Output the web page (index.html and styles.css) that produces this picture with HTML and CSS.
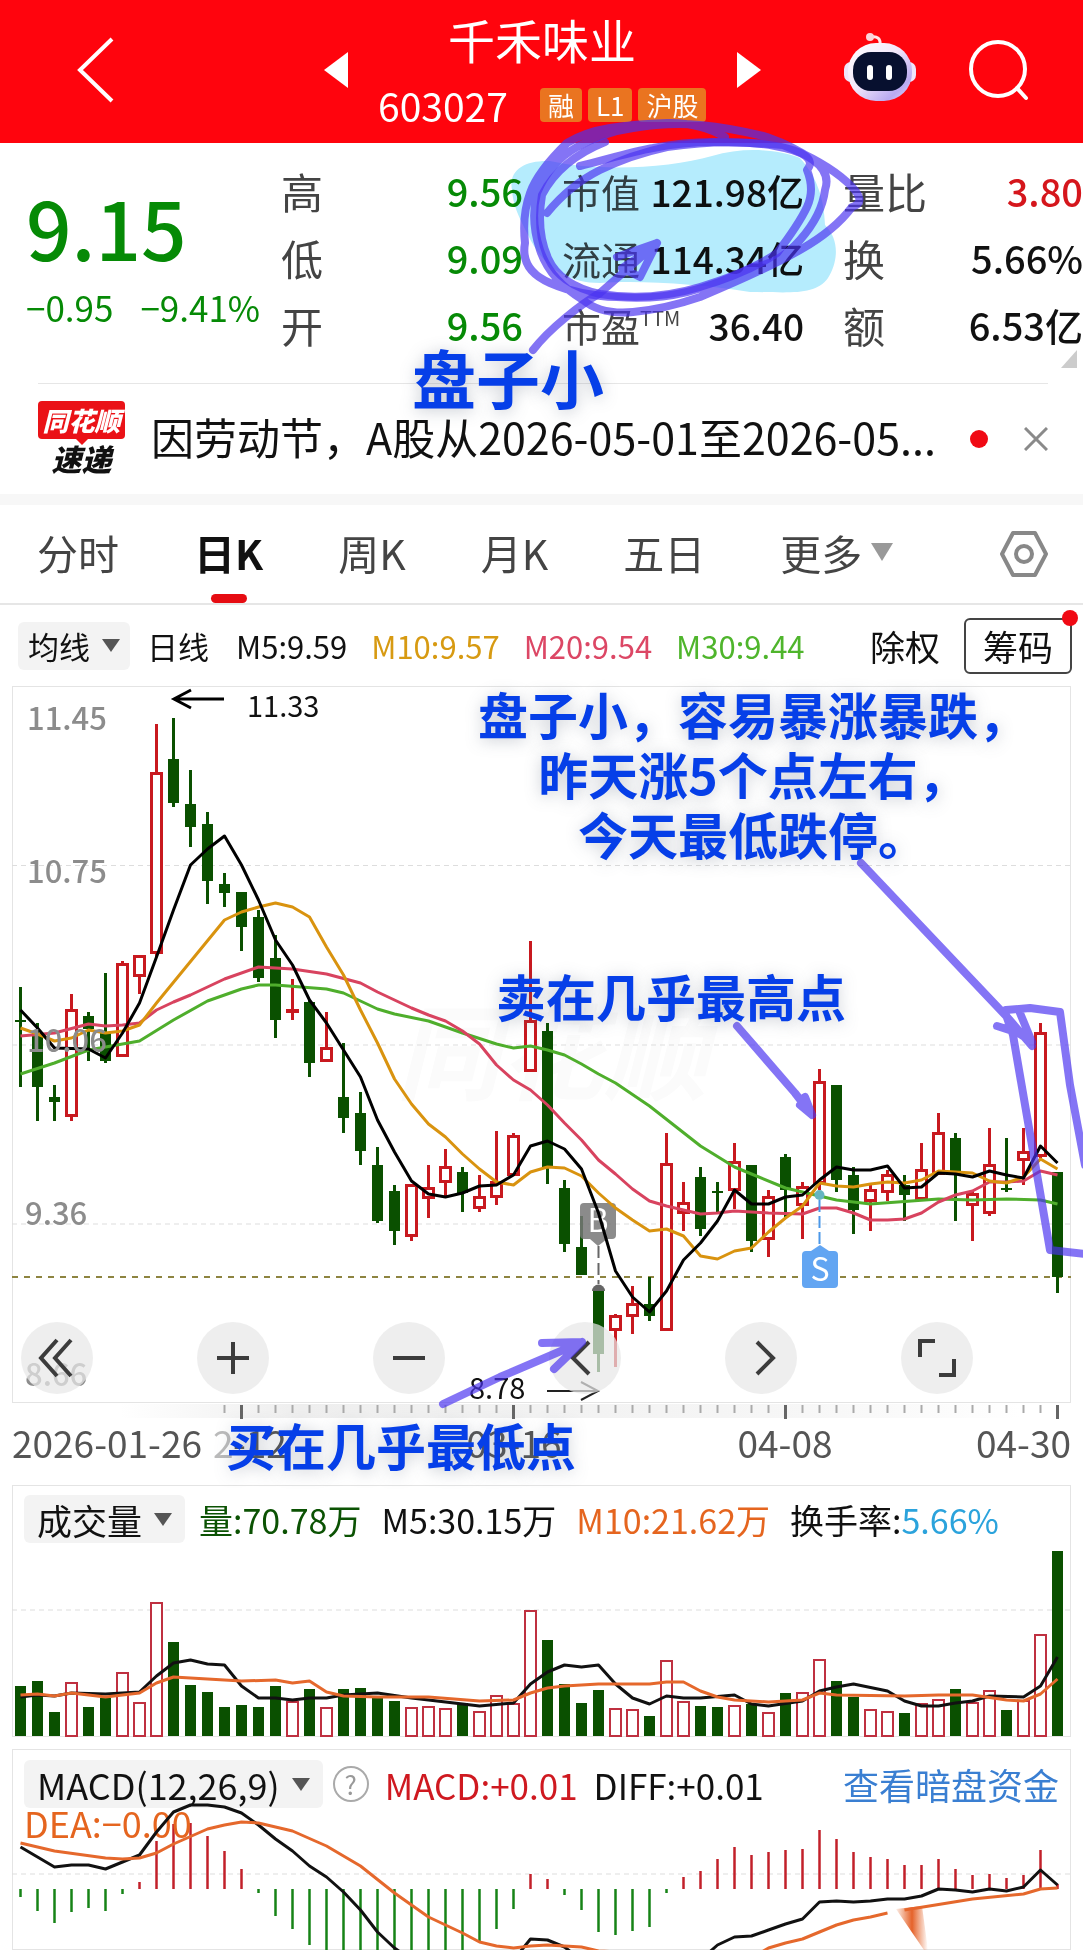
FILE: index.html
```html
<!DOCTYPE html>
<html lang="zh-CN">
<head>
<meta charset="utf-8">
<meta name="viewport" content="width=device-width, initial-scale=1">
<title>千禾味业 603027</title>
<link rel="stylesheet" href="styles.css">
</head>
<body>
<main class="page">
  <header class="topbar">
    <button class="icon-btn back" aria-label="返回"><svg width="40" height="68" viewBox="0 0 40 68"><path d="M36 3 4 34 36 65" fill="none" stroke="#fff" stroke-width="4"/></svg></button>
    <button class="icon-btn" aria-label="上一只"><svg width="24" height="36" viewBox="0 0 24 36"><path d="M24 0V36L0 18Z" fill="#fff"/></svg></button>
    <div class="stock">
      <h1>千禾味业</h1>
      <div class="code-row"><span class="code">603027</span><span class="badge">融</span><span class="badge">L1</span><span class="badge">沪股</span></div>
    </div>
    <button class="icon-btn" aria-label="下一只"><svg width="24" height="36" viewBox="0 0 24 36"><path d="M0 0V36L24 18Z" fill="#fff"/></svg></button>
    <button class="icon-btn robot" aria-label="智能助手">
      <svg width="72" height="70" viewBox="0 0 72 70">
        <defs><linearGradient id="shell" x1="0" y1="0" x2="1" y2="1"><stop offset="0" stop-color="#fff"/><stop offset=".45" stop-color="#f3e8fb"/><stop offset=".8" stop-color="#b9aaf0"/><stop offset="1" stop-color="#e6dcfa"/></linearGradient></defs>
        <path d="M36 14C37 6 33 4 27 5" fill="none" stroke="#ffe6ea" stroke-width="3"/><circle cx="26" cy="5" r="4" fill="#fbd5da"/>
        <rect x="0" y="30" width="14" height="20" rx="7" fill="#efe6fb"/><rect x="58" y="30" width="14" height="20" rx="7" fill="#efe6fb"/>
        <rect x="4" y="11" width="64" height="58" rx="28" fill="url(#shell)"/>
        <rect x="9" y="20" width="54" height="39" rx="18" fill="#07102f"/>
        <rect x="23" y="33" width="6" height="15" rx="3" fill="#fff"/><rect x="42" y="33" width="6" height="15" rx="3" fill="#fff"/>
      </svg>
    </button>
    <button class="icon-btn" aria-label="搜索"><svg width="60" height="62" viewBox="0 0 60 62"><circle cx="29" cy="30" r="27" fill="none" stroke="#fff" stroke-width="4"/><path d="M48 49 57 59" stroke="#fff" stroke-width="4" stroke-linecap="round"/></svg></button>
  </header>

  <section class="quote">
    <div class="price">
      <strong>9.15</strong>
      <div class="change"><span>−0.95</span><span>−9.41%</span></div>
    </div>
    <dl class="stats high"><dt>高</dt><dd>9.56</dd><dt>低</dt><dd>9.09</dd><dt>开</dt><dd>9.56</dd></dl>
    <dl class="stats cap"><dt>市值</dt><dd>121.98亿</dd><dt>流通</dt><dd>114.34亿</dd><dt>市盈<sup>TTM</sup></dt><dd>36.40</dd></dl>
    <dl class="stats ratio"><dt>量比</dt><dd class="up">3.80</dd><dt>换</dt><dd>5.66%</dd><dt>额</dt><dd>6.53亿</dd></dl>
    <svg class="corner" width="16" height="18" viewBox="0 0 16 18"><path d="M16 0V18H0Z" fill="#ccc"/></svg>
  </section>

  <section class="news">
    <div class="news-logo"><span class="logo-top">同花顺</span><span class="logo-bottom">速递</span></div>
    <a class="news-text" href="#">因劳动节，A股从2026-05-01至2026-05...</a>
    <span class="dot"></span>
    <button class="icon-btn" aria-label="关闭"><svg width="24" height="24" viewBox="0 0 24 24"><path d="M1 1 23 23M23 1 1 23" stroke="#8a8a8a" stroke-width="3"/></svg></button>
  </section>

  <nav class="tabs">
    <button>分时</button><button class="active">日K</button><button>周K</button><button>月K</button><button>五日</button>
    <button class="more">更多<svg width="22" height="18" viewBox="0 0 22 18"><path d="M0 0H22L11 18Z" fill="#999"/></svg></button>
    <button class="settings" aria-label="设置"><svg width="48" height="48" viewBox="0 0 48 48"><path d="M13 3H35L46 24 35 45H13L2 24Z" fill="none" stroke="#888" stroke-width="4" stroke-linejoin="round"/><circle cx="24" cy="24" r="8" fill="none" stroke="#888" stroke-width="4"/></svg></button>
  </nav>

  <div class="ma-row">
    <button class="picker">均线<svg width="18" height="13" viewBox="0 0 18 13"><path d="M0 0H18L9 13Z" fill="#555"/></svg></button>
    <span class="period">日线</span>
    <span>M5:9.59</span><span class="m10">M10:9.57</span><span class="m20">M20:9.54</span><span class="m30">M30:9.44</span>
    <button class="adjust">除权</button>
    <button class="chips">筹码</button>
  </div>

  <section class="panel k-panel">
    <svg id="kline" class="plot" viewBox="12 686 1059 717"></svg>
    <div class="tools">
      <button aria-label="更早"><svg width="40" height="40" viewBox="0 0 40 40"><path d="M20 2 4 20 20 38M34 2 18 20 34 38"/></svg></button>
      <button aria-label="放大"><svg width="40" height="40" viewBox="0 0 40 40"><path d="M4 20H36M20 4V36"/></svg></button>
      <button aria-label="缩小"><svg width="40" height="40" viewBox="0 0 40 40"><path d="M4 20H36"/></svg></button>
      <button aria-label="左移"><svg width="40" height="40" viewBox="0 0 40 40"><path d="M24 4 8 20 24 36"/></svg></button>
      <button aria-label="右移"><svg width="40" height="40" viewBox="0 0 40 40"><path d="M16 4 32 20 16 36"/></svg></button>
      <button aria-label="全屏"><svg width="40" height="40" viewBox="0 0 40 40"><path d="M3 19V3H18M37 21V37H22"/></svg></button>
    </div>
  </section>
  <svg id="axis" class="plot axis" viewBox="0 1403 1083 82"></svg>

  <section class="panel">
    <div class="indicators">
      <button class="picker">成交量<svg width="18" height="13" viewBox="0 0 18 13"><path d="M0 0H18L9 13Z" fill="#555"/></svg></button>
      <span class="vol">量:70.78万</span><span>M5:30.15万</span><span class="orange">M10:21.62万</span><span>换手率:<span class="cyan">5.66%</span></span>
    </div>
    <svg id="volume" class="plot" viewBox="12 1550 1059 187"></svg>
  </section>

  <section class="panel macd">
    <div class="indicators">
      <button class="picker">MACD(12,26,9)<svg width="18" height="13" viewBox="0 0 18 13"><path d="M0 0H18L9 13Z" fill="#555"/></svg></button>
      <button class="help" aria-label="说明">?</button>
      <span class="red">MACD:+0.01</span><span>DIFF:+0.01</span>
      <a href="#">查看暗盘资金</a>
    </div>
    <svg id="macd" class="plot" viewBox="12 1809 1059 141"></svg>
  </section>

  <svg class="marker highlighter" viewBox="0 0 1083 1950">
    <path d="M512 190C508 170 525 160 550 161C600 172 670 168 712 156C745 146 780 150 800 158C815 175 824 195 825 225C840 240 838 262 828 278C815 296 790 292 750 292C700 284 640 280 600 283C560 283 540 260 528 235C518 215 513 205 512 190Z"/>
  </svg>
  <svg class="marker pen" viewBox="0 0 1083 1950">
    <path d="M580 166C605 160 630 152 653 148Q683 142 713 142T783 145Q825 162 847 182T852 207Q835 230 800 250T700 297Q665 309 633 312T583 300Q550 280 540 250T537 193Q550 162 577 147T633 128Q668 122 700 125T767 137Q795 147 813 160T825 190Q822 215 800 240T753 267Q720 284 687 292T617 297Q580 296 550 283T525 243Q522 215 530 193T567 143Q585 132 610 128T667 123 725 137"/>
    <path d="M547 213Q570 185 600 170T667 147Q730 138 775 146T807 170Q815 190 807 207T777 253Q750 272 700 287T600 294Q560 285 548 258T542 195Q560 160 605 142"/>
    <path d="M533 350C550 328 580 305 600 293L657 243M617 257 657 243 640 277 622 268 650 250"/>
    <path d="M861 863 1008 1018 1032 1046M997 1026 1022 1034M1020 1013 1032 1042 1008 1026 1030 1040M1006 1010 1030 1008 1060 1012 1070 1085 1085 1165M1005 1012 1013 1035 1050 1250 1085 1254"/>
    <path d="M737 1026 795 1093 812 1115M805 1097 812 1115 800 1105"/>
    <path d="M443 1404 500 1377 582 1342M542 1343 582 1342 554 1369"/>
  </svg>
  <p class="note note-cap">盘子小</p>
  <p class="note note-today">盘子小，容易暴涨暴跌，<br>昨天涨5个点左右，<br>今天最低跌停。</p>
  <p class="note note-sell">卖在几乎最高点</p>
  <p class="note note-buy">买在几乎最低点</p>
</main>
<script src="charts.js"></script>
</body>
</html>
```
FILE: styles.css
```css
* { box-sizing: border-box; }
body {
  margin: 0;
  background: #fff;
  color: #111;
  font-family: "Noto Sans CJK SC", "Noto Sans", sans-serif;
}
button { border: 0; padding: 0; background: none; color: inherit; font: inherit; }
a { color: inherit; text-decoration: none; }
svg { display: block; }
h1, p, dl, dd { margin: 0; }
.page { position: relative; overflow: hidden; }

.topbar {
  display: flex;
  align-items: center;
  height: 143px;
  padding: 0 54px 4px 76px;
  background: #ff040d;
  color: #fff;
}
.back { margin-right: auto; }
.stock { width: 389px; padding: 4px 0 0 30px; }
.stock h1 { text-align: center; padding-right: 31px; font-size: 47px; font-weight: 400; line-height: 66px; }
.code-row { display: flex; align-items: center; gap: 6px; height: 66px; }
.code { margin-right: 26px; font-size: 39px; }
.badge { padding: 0 8px; border-radius: 4px; background: #ea7420; font-size: 26px; line-height: 34px; }
.robot { margin: 0 53px 6px 83px; }

.quote {
  position: relative;
  display: grid;
  grid-template-columns: 255px 281px 281px 240px;
  justify-content: end;
  height: 240px;
  margin: 0 0 0 26px;
}
.price { padding-top: 32px; color: #068a06; }
.price strong { display: block; font-size: 80px; font-weight: 500; line-height: 102px; }
.change { display: flex; gap: 27px; padding-top: 4px; font-size: 35px; line-height: 52px; white-space: nowrap; }
.stats {
  display: grid;
  grid-template-columns: auto auto;
  grid-auto-rows: 67px;
  justify-content: space-between;
  align-content: start;
  align-items: center;
  padding: 14px 39px 0 0;
  font-size: 38px;
  line-height: 60px;
}
.stats dt { color: #444; font-size: 42px; white-space: nowrap; }
.stats dd { font-weight: 500; text-align: right; white-space: nowrap; }
.stats .up { color: #d5161c; }
.stats sup { font-size: 20px; line-height: 1px; vertical-align: 16px; }
.high dd { color: #068a06; }
.cap { font-size: 37px; }
.cap dt { width: 80px; font-size: 39px; }
.ratio { padding-right: 0; }
.corner { position: absolute; right: 6px; bottom: 15px; }

.news {
  display: flex;
  align-items: center;
  height: 111px;
  margin: 0 35px 0 38px;
  border-top: 1px solid #e6e6e6;
}
.news-logo { width: 87px; font-weight: 900; font-style: italic; text-align: center; }
.logo-top { position: relative; display: block; border-radius: 4px; background: #ea1217; color: #fff; font-size: 26px; line-height: 38px; }
.logo-top::after { content: ""; position: absolute; top: 100%; left: 50%; margin-left: -6px; border: 6px solid transparent; border-top-color: #ea1217; border-bottom: 0; }
.logo-bottom { display: block; font-size: 30px; line-height: 38px; }
.news-text { margin-left: 26px; padding-bottom: 6px; font-size: 43px; line-height: 64px; white-space: nowrap; }
.dot { width: 18px; height: 18px; margin: 0 36px 0 auto; border-radius: 50%; background: #f00a14; }

.tabs {
  display: flex;
  align-items: center;
  gap: 75px;
  height: 111px;
  padding: 0 35px 0 37px;
  border-top: 11px solid #f7f7f7;
  border-bottom: 2px solid #e6e6e6;
  color: #444;
  font-size: 41px;
  line-height: 94px;
}
.tabs button { padding-bottom: 4px; }
.tabs .active { position: relative; color: #111; font-weight: 700; }
.active::after { content: ""; position: absolute; bottom: 0; left: 50%; width: 36px; height: 9px; margin-left: -18px; border-radius: 5px; background: #e60c12; }
.more { display: flex; align-items: center; gap: 9px; }
.tabs .settings { margin-left: auto; padding: 0; }

.ma-row {
  display: flex;
  align-items: center;
  gap: 24px;
  height: 81px;
  padding: 0 11px 0 18px;
  font-size: 31px;
  white-space: nowrap;
}
.picker { display: flex; align-items: center; gap: 12px; height: 48px; padding: 0 13px; border-radius: 6px; background: #f3f3f3; }
.ma-row .picker { padding: 0 10px; }
.period { margin: 0 3px 0 -7px; }
.m10 { color: #d79a12; }
.m20 { color: #dc4765; }
.m30 { color: #4fb52c; }
.adjust { margin-left: auto; font-size: 35px; }
.chips { position: relative; width: 108px; height: 56px; border: 2px solid #444; border-radius: 6px; font-size: 35px; line-height: 50px; }
.chips::after { content: ""; position: absolute; top: -10px; right: -8px; width: 16px; height: 16px; border-radius: 50%; background: #f00a14; }

.panel { position: relative; margin: 0 12px 12px; box-shadow: inset 0 0 0 1px #e4e4e4; }
.k-panel { margin-bottom: 0; }
.macd { margin-bottom: 0; }
.plot { width: 100%; height: auto; overflow: visible; }
.tools { position: absolute; left: 9px; bottom: 9px; display: flex; gap: 104px; }
.tools button { display: grid; place-items: center; width: 72px; height: 72px; border-radius: 50%; background: rgba(232, 232, 232, .72); }
.tools path { fill: none; stroke: #3c3c3c; stroke-width: 4; }

.indicators {
  display: flex;
  align-items: center;
  gap: 20px;
  height: 68px;
  margin-bottom: -3px;
  padding: 0 12px;
  font-size: 34px;
  white-space: nowrap;
}
.indicators .picker { margin-right: -6px; font-size: 35px; }
.indicators a { margin-left: auto; color: #3a7fd2; font-size: 36px; }
.macd .indicators { height: 60px; margin: 0; padding-top: 10px; gap: 16px; font-size: 35px; }
.macd .picker { font-size: 36px; }
.help { width: 36px; height: 36px; border: 2px solid #aaa; border-radius: 50%; color: #999; font-size: 26px; line-height: 30px; }
.vol { color: #0b5203; }
.orange { color: #e5651f; }
.cyan { color: #2ba3dc; }
.red { color: #cf1920; }

.marker { position: absolute; top: 0; left: 0; width: 100%; height: auto; pointer-events: none; }
.highlighter { mix-blend-mode: multiply; fill: #b5ecfd; }
.pen path { fill: none; stroke: #4a32f0; stroke-opacity: .68; stroke-width: 8; stroke-linecap: round; stroke-linejoin: round; }
.note { position: absolute; color: #063fe8; font-size: 50px; font-weight: 700; line-height: 60px; text-align: center; white-space: nowrap; text-shadow: 0 2px 16px rgba(90, 100, 120, .35); }
.note-cap { top: 340px; left: 412px; font-size: 64px; line-height: 72px; }
.note-today { top: 683px; left: 478px; }
.note-sell { top: 965px; left: 496px; }
.note-buy { top: 1414px; left: 226px; }

.grid { stroke: #ddd; stroke-width: 1; stroke-dasharray: 5 4; }
.last { stroke: #8d8440; stroke-width: 2; stroke-dasharray: 6 6; }
.line { fill: none; stroke-width: 3; stroke-linejoin: round; }
.scale { fill: #8c8c8c; font-size: 31px; font-weight: 500; }
.extreme { fill: #111; font-size: 29px; }
.date { fill: #555; font-size: 37px; }
.faded { fill: #bbb; }
.watermark { fill: #fbfbfb; font-size: 104px; font-weight: 700; font-style: italic; }
.flag { fill: #fff; font-size: 32px; text-anchor: middle; }
.middle { text-anchor: middle; }
.end { text-anchor: end; }
.dea { fill: #e5651f; font-size: 36px; }
```
FILE: charts.js
```js
const RED = '#c8191f', GREEN = '#0a5000';
const X = i => 20.5 + 17 * i;
const line = (x1, y1, x2, y2, extra) => `<line x1="${x1}" y1="${y1}" x2="${x2}" y2="${y2}" ${extra}/>`;
const grid = y => line(12, y, 1071, y, 'class="grid"');
const text = (x, y, cls, s) => `<text x="${x}" y="${y}" class="${cls}">${s}</text>`;
// Series are written as "index:value" pairs.
const curve = (data, color) => `<polyline class="line" stroke="${color}" points="${data.trim().split(/\s+/).map(p => { const [i, y] = p.split(':'); return X(+i) + ',' + y; }).join(' ')}"/>`;

// kind, high, body top, body bottom, low
const candles = `g987,1020,1022,1087 g1023,1033,1087,1121 g1085,1097,1102,1121 r994,1009,1117,1121 g1012,1016,1029,1061 g973,1033,1061,1063
r961,963,1057,1057 r955,955,977,994 r724,772,954,957 g718,759,803,807 g770,804,827,847 g812,824,881,904 g873,884,893,907 g892,892,927,951
g910,917,978,982 g935,958,1020,1038 r979,1010,1012,1020 g1000,1002,1063,1077 r1012,1047,1062,1062 g1043,1097,1118,1133 g1092,1113,1151,1165
g1147,1165,1221,1223 g1185,1191,1231,1245 r1184,1184,1237,1241 r1165,1187,1199,1218 r1149,1166,1183,1197 g1167,1172,1193,1212
r1175,1196,1209,1212 r1131,1181,1198,1205 r1133,1135,1176,1176 r941,1020,1072,1072 g1023,1031,1168,1184 g1180,1188,1244,1252
g1216,1247,1275,1275 g1287,1291,1354,1372 r1314,1315,1331,1367 r1286,1303,1317,1334 g1277,1304,1316,1321 r1133,1163,1331,1331
r1182,1202,1214,1231 g1167,1177,1229,1236 g1182,1191,1192,1214 r1143,1161,1191,1209 g1165,1165,1241,1252 r1190,1196,1240,1257
g1154,1157,1190,1217 r1182,1186,1206,1239 r1069,1081,1184,1190 g1085,1085,1180,1192 g1167,1175,1210,1234 r1184,1189,1202,1231
r1170,1174,1193,1201 g1175,1185,1195,1221 r1143,1169,1200,1200 r1113,1132,1175,1175 g1133,1138,1174,1221 r1191,1193,1206,1241
r1128,1164,1214,1216 g1138,1188,1190,1192 r1128,1151,1161,1185 r1023,1032,1157,1158 g1172,1172,1277,1293`.split(/\s+/);

let k = text(396, 1092, 'watermark', '同花顺') + [865.5, 1045, 1224].map(grid).join('');
k += line(12, 1277, 1071, 1277, 'class="last"');
candles.forEach((c, i) => {
  const [hi, top, bot, lo] = c.slice(1).split(',').map(Number), x = X(i), h = Math.max(bot - top, 2);
  if (c[0] === 'g') {
    k += line(x, hi, x, lo, `stroke="${GREEN}" stroke-width="3"`) + `<rect x="${x - 5.5}" y="${top}" width="11" height="${h}" fill="${GREEN}"/>`;
  } else {
    k += line(x, hi, x, top, `stroke="${RED}" stroke-width="3"`) + line(x, bot, x, lo, `stroke="${RED}" stroke-width="3"`);
    k += h < 4 ? `<rect x="${x - 6.5}" y="${top - 1}" width="13" height="4" fill="${RED}"/>`
      : `<rect x="${x - 5}" y="${top + 1.5}" width="10" height="${h - 3}" fill="#fff" stroke="${RED}" stroke-width="3"/>`;
  }
});
k += `<g opacity=".85"><rect x="580" y="1203" width="36" height="36" rx="4" fill="#777"/><path d="M590 1239 598 1246 607 1239Z" fill="#777"/></g>` + text(598, 1232, 'flag', 'B');
k += line(598.5, 1246, 598.5, 1284, 'stroke="#666" stroke-width="2" stroke-dasharray="12 5"') + '<path d="M592 1291a6 6 0 0 1 13 0Z" fill="#666"/>';
k += curve(`0:1074 2:1063 4:1050 6:1044 7:1041 9:1020 11:1001 13:989 14:985 15:985 18:989 19:993 21:1009 22:1014 24:1021 26:1033 28:1044 29:1048 30:1046
31:1050 32:1055 33:1064 34:1074 35:1083 37:1106 40:1146 42:1167 43:1174 45:1188 46:1192 48:1200 50:1204 54:1199 56:1200 58:1199 60:1200 61:1204`, '#4fae2c');
k += curve(`0:1036 2:1033 4:1024 5:1026 6:1025 7:1023 8:1010 9:1002 10:995 12:979 14:967 16:969 18:974 20:983 21:992 22:1000 23:1008 24:1015 25:1021
26:1031 27:1044 28:1065 29:1080 30:1090 31:1105 32:1123 33:1140 34:1160 35:1174 36:1189 37:1201 38:1206 39:1210 40:1214 41:1213 42:1211 44:1213
46:1214 47:1208 48:1208 49:1213 50:1220 51:1220 52:1219 53:1213 54:1202 55:1195 56:1191 57:1182 58:1182 59:1181 60:1171 61:1175`, '#d8435f');
k += curve(`0:1028 1:1034 2:1041 3:1038 4:1030 5:1033 6:1031 7:1025 8:1003 12:920 13:912 14:907 15:903 16:907 17:917 18:947 19:975 20:1010 21:1043
22:1079 23:1104 24:1124 25:1137 26:1154 27:1169 28:1182 29:1185 30:1172 31:1167 32:1168 33:1176 34:1193 35:1208 36:1220 37:1231 38:1229 39:1236
40:1256 41:1259 42:1251 43:1248 44:1232 45:1218 46:1206 47:1183 48:1186 49:1187 50:1184 51:1182 52:1183 53:1180 54:1171 55:1172 56:1173 57:1181
58:1183 59:1177 60:1159 61:1169`, '#d9930f');
k += curve(`0:1010 1:1028 2:1048 4:1049 5:1058 6:1033 7:1003 8:957 9:910 10:865 11:849 12:836 13:865 14:900 15:940 16:965 17:1000 18:1023 19:1050
20:1077 21:1120 22:1152 23:1181 24:1194 25:1197 26:1193 27:1186 28:1185 29:1175 30:1146 31:1141 32:1149 33:1169 34:1213 35:1271 36:1297 37:1312
38:1291 39:1260 40:1243 41:1221 42:1190 43:1204 44:1204 45:1197 46:1195 47:1180 48:1167 49:1170 50:1170 51:1166 52:1188 53:1187 54:1173 55:1174
56:1177 57:1171 58:1175 59:1178 60:1146 61:1163`, '#000');
k += text(27, 730, 'scale', '11.45') + text(27, 883, 'scale', '10.75') + text(27, 1052, 'scale', '10.06') + text(25, 1225, 'scale', '9.36') + text(25, 1386, 'scale', '8.66');
k += '<circle cx="819.5" cy="1195" r="5" fill="#66b5c0"/>' + line(819.5, 1200, 819.5, 1248, 'stroke="#4b97e8" stroke-width="2" stroke-dasharray="12 4"');
k += '<rect x="802" y="1251" width="36" height="37" rx="4" fill="#62a5f2"/><path d="M811 1251 820 1245 829 1251Z" fill="#62a5f2"/>' + text(820, 1281, 'flag', 'S');
k += text(247, 717, 'extreme', '11.33') + '<path d="M224 699H174M191 690 174 699 191 708" fill="none" stroke="#000" stroke-width="3"/>';
k += text(469, 1399, 'extreme', '8.78') + '<path d="M547 1391H598M581 1382 598 1391 581 1400" fill="none" stroke="#222" stroke-width="2"/>';
document.getElementById('kline').innerHTML = k;

let a = '<defs><linearGradient id="fade"><stop offset="0" stop-color="#eee" stop-opacity="0"/><stop offset=".2" stop-color="#eee"/><stop offset=".6" stop-color="#f4f4f4"/><stop offset="1" stop-color="#eee" stop-opacity="0"/></linearGradient></defs><rect x="120" y="1404" width="900" height="14" fill="url(#fade)"/>';
for (let i = 12; i < 62; i++) {
  const major = (i - 13) % 16 === 0;
  a += line(X(i), 1405, X(i), major ? 1419 : 1413, `stroke="${major ? '#666' : '#aaa'}" stroke-width="${major ? 3 : 2}"`);
}
a += text(12, 1458, 'date', '2026-01-26') + text(213, 1458, 'date faded', '2') + text(233, 1458, 'date', '-12');
a += text(514, 1458, 'date middle', '03-16') + text(785, 1458, 'date middle', '04-08') + text(1071, 1458, 'date end', '04-30');
document.getElementById('axis').innerHTML = a;

const volumes = `g1686 g1681 g1712 r1682 g1707 g1698 r1672 r1702 r1602 g1642 g1685 g1692 g1707 g1705 g1707 g1686 r1701 g1689 r1707 g1689 g1688 g1698
g1701 r1707 r1706 r1708 g1703 r1711 r1695 r1703 r1610 g1640 g1684 g1703 g1690 r1708 r1709 g1716 r1660 r1701 g1706 g1707 r1705 g1704 r1712 g1693
r1692 r1659 g1681 g1697 r1709 r1711 g1713 r1703 r1699 g1689 r1702 r1690 g1710 r1700 r1634 g1551`.split(/\s+/);
let v = grid(1610);
volumes.forEach((c, i) => {
  const y = +c.slice(1), x = X(i);
  v += c[0] === 'g' ? `<rect x="${x - 5.5}" y="${y}" width="11" height="${1736 - y}" fill="${GREEN}"/>`
    : `<rect x="${x - 5.5}" y="${y + 1}" width="11" height="${1735 - y}" fill="#fff" stroke="#bf3040" stroke-width="2"/>`;
});
v += curve(`0:1697 1:1695 2:1696 3:1693 5:1694 7:1692 8:1676 9:1663 10:1660 11:1664 12:1665 13:1686 14:1698 15:1698 16:1700 17:1698 18:1698 19:1695
21:1693 23:1698 25:1702 26:1704 27:1706 29:1703 30:1684 31:1672 32:1665 33:1667 34:1665 35:1684 36:1698 37:1704 38:1696 39:1698 40:1698 42:1695
43:1704 44:1706 46:1701 47:1691 48:1687 49:1684 51:1691 52:1701 53:1706 54:1706 55:1703 56:1701 57:1696 59:1697 60:1686 61:1657`, '#111');
v += curve(`0:1695 1:1694 2:1696 3:1693 5:1697 7:1693 8:1683 9:1677 11:1679 13:1681 15:1680 16:1683 17:1681 18:1692 19:1696 21:1697 24:1697 27:1701
29:1700 30:1693 31:1688 32:1686 34:1684 37:1684 38:1682 39:1682 40:1691 41:1697 42:1700 44:1702 46:1700 47:1693 48:1695 52:1696 54:1695 56:1695
58:1700 59:1701 60:1694 61:1679`, '#e5682c');
document.getElementById('volume').innerHTML = v;

const bars = [-8, -22, -34, -23, -19, -22, -5, 7, 48, 65, 66, 53, 38, 20, -4, -27, -40, -56, -61, -61, -61, -61, -61, -61, -61, -61, -61, -53, -40, -20,
  15, 10, -6, -21, -43, -46, -42, -38, -4, 12, 18, 30, 42, 34, 37, 39, 40, 59, 50, 37, 32, 30, 24, 24, 30, 20, 14, 15, 11, 14, 39, 5];
let m = grid(1874);
bars.forEach((b, i) => { m += line(X(i), 1889, X(i), 1889 - b, `stroke="${b > 0 ? '#c2202a' : '#168316'}" stroke-width="2.5"`); });
m += text(24, 1838, 'dea', 'DEA:−0.00');
m += curve(`0:1847 2:1867 3:1865 4:1865 5:1869 7:1855 8:1832 9:1812 10:1805 11:1805 12:1807 13:1813 14:1825 15:1839 16:1851 17:1866 18:1877 19:1892
20:1910 21:1932 22:1948 23:1960 29:1960 30:1939 31:1940 32:1947 33:1960 40:1960 41:1945 42:1937 43:1936 44:1930 45:1924 46:1919 47:1902 48:1901
49:1902 50:1901 51:1899 52:1899 53:1896 54:1889 55:1890 56:1892 57:1889 58:1891 59:1887 60:1870 61:1885`, '#111');
m += curve(`0:1843 2:1851 5:1858 6:1859 7:1858 8:1853 9:1844 11:1829 12:1825 13:1822 14:1823 15:1827 16:1831 18:1846 20:1866 22:1893 24:1917 26:1933
27:1942 28:1946 29:1948 30:1946 31:1945 33:1947 34:1951 43:1958 44:1948 45:1943 46:1939 47:1932 48:1925 49:1920 50:1917 51:1913`, '#e5682c');
m += curve('52:1910 56:1899 59:1894 60:1889 61:1888', '#e5682c');
m += '<defs><linearGradient id="flare"><stop offset="0" stop-color="#e5682c" stop-opacity=".1"/><stop offset=".5" stop-color="#e5622a"/><stop offset="1" stop-color="#e5682c" stop-opacity="0"/></linearGradient></defs><path d="M896 1909 922 1906 928 1950H924Z" fill="url(#flare)"/>';
document.getElementById('macd').innerHTML = m;
```
